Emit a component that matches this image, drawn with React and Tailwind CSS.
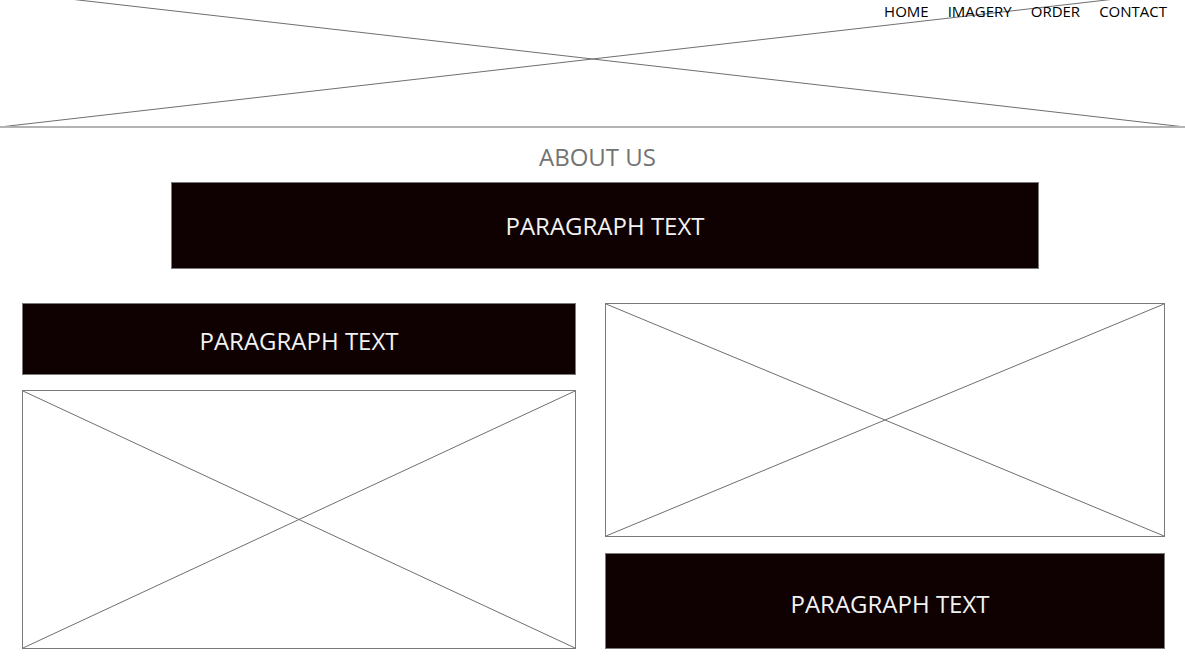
import React from 'react';

const navItems = ['HOME', 'IMAGERY', 'ORDER', 'CONTACT'];

const Placeholder = ({ className = '' }) => (
  <div className={`relative border border-[#7a7a7a] bg-white ${className}`}>
    <svg className="absolute inset-0 h-full w-full" preserveAspectRatio="none" viewBox="0 0 100 100">
      <line x1="0" y1="0" x2="100" y2="100" stroke="#6f6f6f" strokeWidth="1" vectorEffect="non-scaling-stroke" />
      <line x1="0" y1="100" x2="100" y2="0" stroke="#6f6f6f" strokeWidth="1" vectorEffect="non-scaling-stroke" />
    </svg>
  </div>
);

const ParagraphBox = ({ className = '' }) => (
  <div
    className={`flex items-center justify-center border border-[#7a7a7a] bg-[#0f0101] text-[24px] text-[#f2f2f2] ${className}`}
  >
    PARAGRAPH TEXT
  </div>
);

export default function App() {
  return (
    <div className="min-h-[658px] bg-white font-['Open_Sans',sans-serif]">
      {/* Header banner */}
      <header className="relative h-[128px] border-b-2 border-[#b3b3b3]">
        <svg className="absolute inset-0 h-[126px] w-full" preserveAspectRatio="none" viewBox="0 0 1185 126">
          <line x1="0" y1="-9" x2="1185" y2="127" stroke="#6f6f6f" strokeWidth="1" />
          <line x1="0" y1="127" x2="1185" y2="-9" stroke="#6f6f6f" strokeWidth="1" />
        </svg>
        <nav className="absolute right-[18px] top-0 flex gap-[19px] text-[15px] text-black">
          {navItems.map((item) => (
            <a key={item} href="#" className="leading-[22px]">
              {item}
            </a>
          ))}
        </nav>
      </header>

      <h2 className="mt-[13px] pl-[10px] text-center text-[24px] leading-[32px] text-[#737373]">ABOUT US</h2>

      <div className="mt-[9px] flex">
        <ParagraphBox className="ml-[171px] h-[87px] w-[868px]" />
      </div>

      <div className="mt-[34px] flex gap-[29px] pl-[22px] pr-[20px]">
        <div className="flex w-[555px] flex-col gap-[15px]">
          <ParagraphBox className="h-[72px] pt-[4px]" />
          <Placeholder className="h-[259px]" />
        </div>
        <div className="flex w-[561px] flex-col gap-[16px]">
          <Placeholder className="h-[234px]" />
          <ParagraphBox className="h-[96px] pl-[10px] pt-[6px]" />
        </div>
      </div>
    </div>
  );
}
